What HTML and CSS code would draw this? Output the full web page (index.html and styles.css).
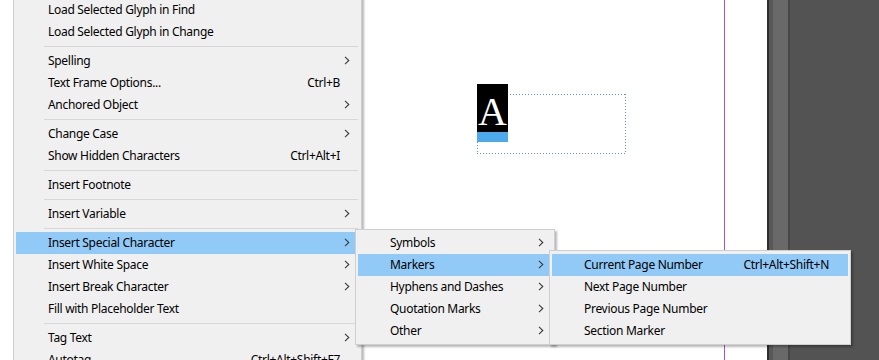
FILE: index.html
```html
<!DOCTYPE html>
<html>
<head>
<meta charset="utf-8">
<link rel="stylesheet" href="styles.css">
</head>
<body>
<div class="app">
  <div class="page">
    <div class="live-area"></div>
    <div class="frame"></div>
    <div class="glyph-sel"><span class="glyph">A</span><span class="glyph-bar"></span></div>
  </div>
  <div class="panel">
    <div class="strip s1"></div>
    <div class="strip s2"></div>
    <div class="strip s3"></div>
    <div class="strip s4"></div>
    <div class="strip s5"></div>
  </div>

  <div class="menu main-menu">
    <div class="item"><span class="label">Load Selected Glyph in Find</span></div>
    <div class="item"><span class="label">Load Selected Glyph in Change</span></div>
    <div class="sep"></div>
    <div class="item"><span class="label">Spelling</span><span class="arrow"><svg width="6" height="9" viewBox="0 0 6 9"><path d="M1 0.8 L4.8 4.5 L1 8.2" fill="none" stroke="#3c3c3c" stroke-width="1.1"/></svg></span></div>
    <div class="item"><span class="label">Text Frame Options...</span><span class="key">Ctrl+B</span><span class="arrow"></span></div>
    <div class="item"><span class="label">Anchored Object</span><span class="arrow"><svg width="6" height="9" viewBox="0 0 6 9"><path d="M1 0.8 L4.8 4.5 L1 8.2" fill="none" stroke="#3c3c3c" stroke-width="1.1"/></svg></span></div>
    <div class="sep"></div>
    <div class="item"><span class="label">Change Case</span><span class="arrow"><svg width="6" height="9" viewBox="0 0 6 9"><path d="M1 0.8 L4.8 4.5 L1 8.2" fill="none" stroke="#3c3c3c" stroke-width="1.1"/></svg></span></div>
    <div class="item"><span class="label">Show Hidden Characters</span><span class="key">Ctrl+Alt+I</span><span class="arrow"></span></div>
    <div class="sep"></div>
    <div class="item"><span class="label">Insert Footnote</span></div>
    <div class="sep"></div>
    <div class="item"><span class="label">Insert Variable</span><span class="arrow"><svg width="6" height="9" viewBox="0 0 6 9"><path d="M1 0.8 L4.8 4.5 L1 8.2" fill="none" stroke="#3c3c3c" stroke-width="1.1"/></svg></span></div>
    <div class="sep"></div>
    <div class="item active"><span class="label">Insert Special Character</span><span class="arrow"><svg width="6" height="9" viewBox="0 0 6 9"><path d="M1 0.8 L4.8 4.5 L1 8.2" fill="none" stroke="#3c3c3c" stroke-width="1.1"/></svg></span></div>
    <div class="item"><span class="label">Insert White Space</span><span class="arrow"><svg width="6" height="9" viewBox="0 0 6 9"><path d="M1 0.8 L4.8 4.5 L1 8.2" fill="none" stroke="#3c3c3c" stroke-width="1.1"/></svg></span></div>
    <div class="item"><span class="label">Insert Break Character</span><span class="arrow"><svg width="6" height="9" viewBox="0 0 6 9"><path d="M1 0.8 L4.8 4.5 L1 8.2" fill="none" stroke="#3c3c3c" stroke-width="1.1"/></svg></span></div>
    <div class="item"><span class="label">Fill with Placeholder Text</span></div>
    <div class="sep"></div>
    <div class="item"><span class="label">Tag Text</span><span class="arrow"><svg width="6" height="9" viewBox="0 0 6 9"><path d="M1 0.8 L4.8 4.5 L1 8.2" fill="none" stroke="#3c3c3c" stroke-width="1.1"/></svg></span></div>
    <div class="item"><span class="label">Autotag</span><span class="key">Ctrl+Alt+Shift+F7</span><span class="arrow"></span></div>
  </div>

  <div class="menu sub-menu">
    <div class="item"><span class="label">Symbols</span><span class="arrow"><svg width="6" height="9" viewBox="0 0 6 9"><path d="M1 0.8 L4.8 4.5 L1 8.2" fill="none" stroke="#3c3c3c" stroke-width="1.1"/></svg></span></div>
    <div class="item active"><span class="label">Markers</span><span class="arrow"><svg width="6" height="9" viewBox="0 0 6 9"><path d="M1 0.8 L4.8 4.5 L1 8.2" fill="none" stroke="#3c3c3c" stroke-width="1.1"/></svg></span></div>
    <div class="item"><span class="label">Hyphens and Dashes</span><span class="arrow"><svg width="6" height="9" viewBox="0 0 6 9"><path d="M1 0.8 L4.8 4.5 L1 8.2" fill="none" stroke="#3c3c3c" stroke-width="1.1"/></svg></span></div>
    <div class="item"><span class="label">Quotation Marks</span><span class="arrow"><svg width="6" height="9" viewBox="0 0 6 9"><path d="M1 0.8 L4.8 4.5 L1 8.2" fill="none" stroke="#3c3c3c" stroke-width="1.1"/></svg></span></div>
    <div class="item"><span class="label">Other</span><span class="arrow"><svg width="6" height="9" viewBox="0 0 6 9"><path d="M1 0.8 L4.8 4.5 L1 8.2" fill="none" stroke="#3c3c3c" stroke-width="1.1"/></svg></span></div>
  </div>

  <div class="menu sub-menu2">
    <div class="item active"><span class="label">Current Page Number</span><span class="key">Ctrl+Alt+Shift+N</span></div>
    <div class="item"><span class="label">Next Page Number</span></div>
    <div class="item"><span class="label">Previous Page Number</span></div>
    <div class="item"><span class="label">Section Marker</span></div>
  </div>
</div>
</body>
</html>
```

FILE: styles.css
```css
* { box-sizing: border-box; }
html, body { margin: 0; padding: 0; }
body {
  width: 879px;
  height: 360px;
  overflow: hidden;
  font-family: "Segoe UI", "Noto Sans", "Liberation Sans", sans-serif;
  font-size: 12px;
  letter-spacing: -0.3px;
  color: #000;
  background: #fff;
}
.app {
  position: relative;
  width: 879px;
  height: 360px;
  display: flex;
}
.page {
  position: relative;
  width: 767px;
  height: 360px;
  background: #fff;
  padding-right: 42px;
}
.live-area {
  height: 100%;
  border-right: 1px solid #9b55d2;
}
.frame {
  position: absolute;
  left: 477px;
  top: 94px;
  width: 149px;
  height: 60px;
  background:
    repeating-linear-gradient(90deg, #6a98a8 0 1px, transparent 1px 3px) left top / 100% 1px no-repeat,
    repeating-linear-gradient(90deg, #6a98a8 0 1px, transparent 1px 3px) left bottom / 100% 1px no-repeat,
    repeating-linear-gradient(180deg, #6a98a8 0 1px, transparent 1px 3px) left top / 1px 100% no-repeat,
    repeating-linear-gradient(180deg, #6a98a8 0 1px, transparent 1px 3px) right top / 1px 100% no-repeat;
}
.glyph-sel {
  position: absolute;
  left: 477px;
  top: 84px;
  width: 31px;
  display: flex;
  flex-direction: column;
}
.glyph {
  display: block;
  height: 48px;
  background: #000;
  color: #fff;
  font-family: "Liberation Serif", "DejaVu Serif", serif;
  font-size: 40px;
  letter-spacing: 0;
  line-height: 48px;
  text-align: center;
  padding-top: 4px;
}
.glyph-bar {
  display: block;
  height: 10px;
  background: #4ea8ec;
}
.panel {
  flex: 1;
  display: flex;
  height: 360px;
}
.strip { height: 100%; }
.s1 { width: 2px; background: #2e2e2e; }
.s2 { width: 4px; background: #585858; }
.s3 { width: 15px; background: #696969; }
.s4 { width: 2px; background: #474747; }
.s5 { flex: 1; background: #535353; }

.menu {
  position: absolute;
  background: #f0f0f0;
  border: 1px solid #cfcfcf;
  box-shadow: 2px 2px 2px rgba(0, 0, 0, 0.28);
  padding: 2px;
}
.main-menu {
  left: 13px;
  top: -4px;
  width: 349px;
  padding-right: 3px;
}
.sub-menu {
  left: 355px;
  top: 229px;
  width: 200px;
}
.sub-menu2 {
  left: 549px;
  top: 250px;
  width: 302px;
  padding-top: 3px;
}
.item {
  height: 22px;
  display: flex;
  align-items: center;
  padding-left: 32px;
  padding-bottom: 1px;
  white-space: nowrap;
}
.item.active { background: #91c9f7; }
.label { flex: 1; }
.arrow {
  width: 18px;
  display: flex;
  justify-content: flex-start;
  align-items: center;
  padding-left: 4px;
}
.arrow svg { display: block; }
.sub-menu .arrow { width: 12px; padding-left: 0; }
.sub-menu .item { padding-right: 2px; }
.sub-menu2 .key { padding-right: 19px; }
.sep {
  height: 1px;
  margin: 3px 0 3px 28px;
  background: #d7d7d7;
}
```
